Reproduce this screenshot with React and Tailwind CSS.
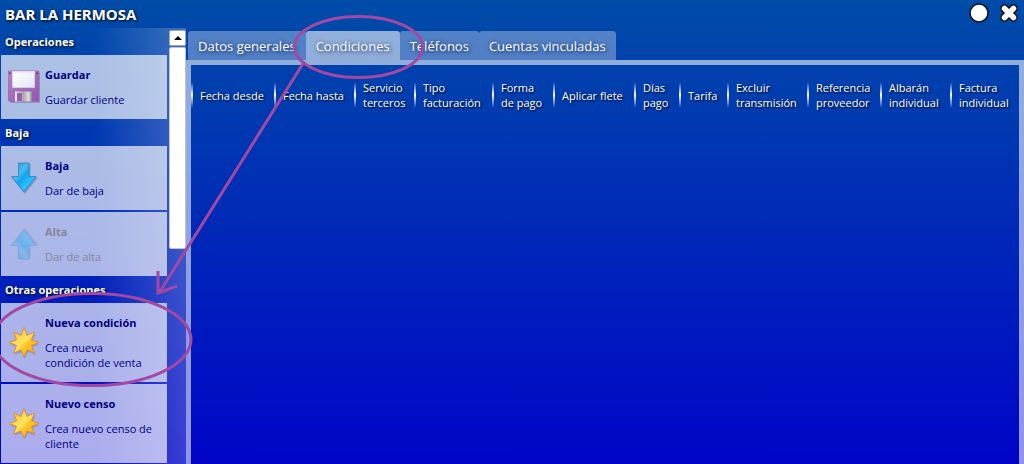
import React from "react";

const cards = {
  operaciones: [{ title: "Guardar", text: "Guardar cliente", icon: "floppy" }],
  baja: [
    { title: "Baja", text: "Dar de baja", icon: "down" },
    { title: "Alta", text: "Dar de alta", icon: "up", disabled: true },
  ],
  otras: [
    { title: "Nueva condición", text: "Crea nueva\ncondición de venta", icon: "star" },
    { title: "Nuevo censo", text: "Crea nuevo censo de\ncliente", icon: "star" },
  ],
};

const tabs = ["Datos generales", "Condiciones", "Teléfonos", "Cuentas vinculadas"];

const columns = [
  { label: "Fecha desde", width: "w-[83px]" },
  { label: "Fecha hasta", width: "w-[80px]" },
  { label: "Servicio\nterceros", width: "w-[60px]" },
  { label: "Tipo\nfacturación", width: "w-[78px]" },
  { label: "Forma\nde pago", width: "w-[61px]" },
  { label: "Aplicar flete", width: "w-[81px]" },
  { label: "Días\npago", width: "w-[45px]" },
  { label: "Tarifa", width: "w-[48px]" },
  { label: "Excluir\ntransmisión", width: "w-[80px]" },
  { label: "Referencia\nproveedor", width: "w-[73px]" },
  { label: "Albarán\nindividual", width: "w-[70px]" },
  { label: "Factura\nindividual", width: "w-auto" },
];

function Floppy() {
  return (
    <svg width="32" height="34" viewBox="0 0 32 34" aria-hidden="true">
      <defs>
        <linearGradient id="body" x1="0" y1="0" x2="1" y2="1">
          <stop offset="0" stopColor="#b583cb" />
          <stop offset="1" stopColor="#9355ae" />
        </linearGradient>
        <linearGradient id="label" x1="0" y1="0" x2="1" y2="1">
          <stop offset="0" stopColor="#fff" />
          <stop offset="1" stopColor="#e4e6f8" />
        </linearGradient>
        <linearGradient id="metal" x1="0" y1="0" x2="1" y2="0">
          <stop offset="0" stopColor="#eee" />
          <stop offset="0.5" stopColor="#aaa" />
          <stop offset="0.8" stopColor="#ddd" />
          <stop offset="1" stopColor="#888" />
        </linearGradient>
      </defs>
      <path d="M2 3h30v30H2z" fill="#55557a" opacity=".35" />
      <path d="M0 1h31v30.500H1.500L0 30z" fill="url(#body)" stroke="#9a68b0" strokeWidth=".6" />
      <path d="M4 1h23v17H4z" fill="url(#label)" stroke="#9c83b2" strokeWidth=".6" />
      <path d="M4 1h23v1.500H4z" fill="#e8d8ea" />
      <path d="M7 21.500h17v10H7z" fill="url(#metal)" />
      <path d="M9 23h5v8H9z" fill="#9860b0" />
      <path d="M1 2.500h1.500V4H1zM28.500 2.500H30V4h-1.500z" fill="#50305f" />
    </svg>
  );
}

function Arrow({ up }) {
  return (
    <svg width="28" height="34" viewBox="0 0 28 34" aria-hidden="true" className={up ? "opacity-40" : ""}>
      <defs>
        <linearGradient id="arrow" x1="0" y1="0" x2="1" y2="1">
          <stop offset="0" stopColor="#1a86c4" />
          <stop offset=".35" stopColor="#4abcec" />
          <stop offset=".48" stopColor="#12a4f0" />
          <stop offset=".7" stopColor="#2cc2ff" />
          <stop offset="1" stopColor="#1088d0" />
        </linearGradient>
      </defs>
      <g transform={up ? "matrix(1 0 0 -1 0 34)" : undefined}>
        <path d="M9.500 3h11v13.500h7.500L15 33 2 17h7.500z" fill="#444a78" opacity=".35" />
        <path
          d="M8.500 2h10.500v13.500h7L13.800 31 1.500 15.500h7z"
          fill="url(#arrow)"
          stroke="#2585b8"
          strokeWidth=".8"
          strokeLinejoin="round"
        />
      </g>
    </svg>
  );
}

function Star() {
  return (
    <svg width="32" height="34" viewBox="0 0 32 34" aria-hidden="true">
      <defs>
        <linearGradient id="star" x1="0" y1="0" x2="1" y2="1">
          <stop offset=".1" stopColor="#ffc018" />
          <stop offset=".48" stopColor="#ffe468" />
          <stop offset=".56" stopColor="#ffc828" />
          <stop offset="1" stopColor="#f29a08" />
        </linearGradient>
      </defs>
      <path
        d="M17 3l3 8 7.500-3-3 7.500 7 3-7 3 3 7.500-7.500-3-3 6.500-3-6.500-7.500 3 3-7.500-7-3 7-3z"
        fill="#66608a"
        opacity=".3"
      />
      <path
        d="M16 1.500l3 8 7.500-3.500-3 7.800 7.500 2.700-7.500 3 3 7.500-7.500-3-3 7.500-3-7.500-7.500 3 3-7.500L1 16.500l7.500-2.700L5.500 6 13 9.500z"
        fill="url(#star)"
        stroke="#d2923a"
        strokeWidth="1"
        strokeLinejoin="round"
      />
    </svg>
  );
}

function Icon({ name }) {
  if (name === "floppy") return <Floppy />;
  if (name === "star") return <Star />;
  return <Arrow up={name === "up"} />;
}

function Group({ title, items }) {
  return (
    <section>
      <h2 className="flex h-[27px] items-center pl-1 text-[11px] leading-4 font-bold text-white [text-shadow:1px_1px_3px_#000]">
        {title}
      </h2>
      <div className="flex flex-col gap-[2px]">
        {items.map((item) => (
          <button
            key={item.title}
            type="button"
            disabled={item.disabled}
            className={`flex w-full items-center bg-white/67 py-3 text-left text-[11px] leading-[15px] ${item.disabled ? "text-[#85859a]" : "text-[#00007f]"}`}
          >
            <span className="flex w-11 shrink-0 justify-center pl-[2px]">
              <Icon name={item.icon} />
            </span>
            <span className="flex flex-col gap-[10px]">
              <span className="font-bold">{item.title}</span>
              <span className="whitespace-pre-line">{item.text}</span>
            </span>
          </button>
        ))}
      </div>
    </section>
  );
}

export default function App() {
  return (
    <div className="relative flex min-h-screen flex-col overflow-hidden bg-linear-to-b/srgb from-[#004ca8] to-[#0004c8] font-['Open_Sans','Noto_Sans',sans-serif]">
      <header className="flex h-7 items-center justify-between pr-[5px] pl-[5px]">
        <h1 className="text-[15px] leading-5 font-bold text-white [text-shadow:1px_1px_3px_#000]">BAR LA HERMOSA</h1>
        <div className="flex gap-[10px] pb-[2px]">
          <button type="button" aria-label="Minimizar">
            <svg width="20" height="22" viewBox="0 0 20 22" aria-hidden="true">
              <circle cx="10" cy="11" r="9" fill="#fff" stroke="#111" strokeWidth="1.500" />
            </svg>
          </button>
          <button type="button" aria-label="Cerrar">
            <svg width="20" height="22" viewBox="0 0 20 22" aria-hidden="true">
              <path d="M5.500 6.500l9 9m0-9l-9 9" stroke="#111" strokeWidth="8.500" strokeLinecap="round" />
              <path d="M5.500 6.500l9 9m0-9l-9 9" stroke="#fff" strokeWidth="5.500" strokeLinecap="round" />
            </svg>
          </button>
        </div>
      </header>

      <div className="flex flex-1">
        <aside className="flex w-[186px] shrink-0 bg-linear-to-r from-white/0 from-50% to-white/23 to-100%">
          <div className="flex-1 pr-[2px] pl-px">
            <Group title="Operaciones" items={cards.operaciones} />
            <Group title="Baja" items={cards.baja} />
            <Group title="Otras operaciones" items={cards.otras} />
          </div>
          <div className="flex w-[17px] flex-col gap-px pt-[2px]">
            <button
              type="button"
              aria-label="Subir"
              className="flex h-4 items-center justify-center rounded-[2px] border border-[#a0a8b8] bg-white"
            >
              <svg width="8" height="4" viewBox="0 0 8 4" aria-hidden="true">
                <path d="M0 4l4-4 4 4z" fill="#000" />
              </svg>
            </button>
            <div className="h-[202px] rounded-[2px] border border-[#c4c4c4] bg-white" />
          </div>
        </aside>

        <main className="flex flex-1 flex-col">
          <div role="tablist" className="flex pt-[3px] pl-[2px]">
            {tabs.map((tab, i) => (
              <button
                key={tab}
                type="button"
                role="tab"
                aria-selected={i === 1}
                className={`h-[29px] rounded-t-[3px] px-[10px] text-[13px] leading-5 text-white [text-shadow:1px_1px_4px_#0a1a50] ${i === 1 ? "bg-white/57" : "bg-white/32"}`}
              >
                {tab}
              </button>
            ))}
          </div>
          <div className="flex-1 border-5 border-b-0 border-white/57">
            <table className="mt-[15px] w-full table-fixed">
              <thead>
                <tr>
                  {columns.map((c) => (
                    <th
                      key={c.label}
                      scope="col"
                      className={`h-[30px] text-left align-middle text-[11px] leading-[15px] font-normal whitespace-pre-line text-white [text-shadow:1px_1px_2px_#000] ${c.width}`}
                    >
                      <div className="flex items-center gap-[7px]">
                        <span className="h-[26px] w-[2px] shrink-0 bg-linear-to-b from-white/0 via-white to-white/0" />
                        <span>{c.label}</span>
                      </div>
                    </th>
                  ))}
                </tr>
              </thead>
            </table>
          </div>
        </main>
      </div>

      <svg
        className="pointer-events-none absolute top-0 left-0"
        width="440"
        height="400"
        viewBox="0 0 440 400"
        fill="none"
        stroke="#a349a4"
        strokeWidth="3"
        aria-hidden="true"
      >
        <ellipse cx="358.500" cy="47" rx="64" ry="30.500" />
        <path d="M304 62L159 293M158 271v22l19-7" />
        <ellipse cx="92" cy="339.500" rx="99" ry="46" />
      </svg>
    </div>
  );
}
